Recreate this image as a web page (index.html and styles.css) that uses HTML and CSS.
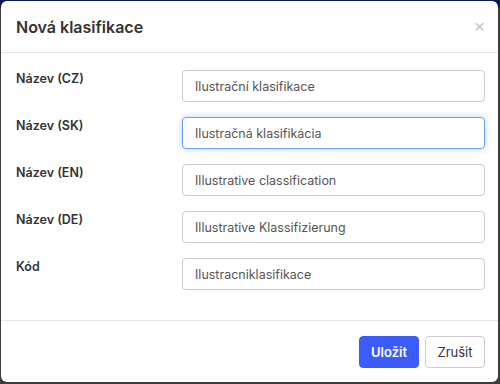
FILE: index.html
```html
<!DOCTYPE html>
<html lang="cs">
<head>
  <meta charset="UTF-8" />
  <meta name="viewport" content="width=device-width, initial-scale=1.0" />
  <title>Nová klasifikace</title>
  <link rel="stylesheet" href="styles.css">
</head>
<body>
  <div class="modal">
    <div class="modal-header">
      <h4>Nová klasifikace</h4>
      <button class="close" type="button">&times;</button>
    </div>

    <form class="modal-body">
      <div class="row">
        <label for="name-cz">Název (CZ)</label>
        <input id="name-cz" type="text" value="Ilustrační klasifikace" />
      </div>
      <div class="row">
        <label for="name-sk">Název (SK)</label>
        <input id="name-sk" class="focused" type="text" value="Ilustračná klasifikácia" />
      </div>
      <div class="row">
        <label for="name-en">Název (EN)</label>
        <input id="name-en" type="text" value="Illustrative classification" />
      </div>
      <div class="row">
        <label for="name-de">Název (DE)</label>
        <input id="name-de" type="text" value="Illustrative Klassifizierung" />
      </div>
      <div class="row">
        <label for="code">Kód</label>
        <input id="code" type="text" value="Ilustracniklasifikace" />
      </div>
    </form>

    <div class="modal-footer">
      <button class="btn btn-primary" type="button">Uložit</button>
      <button class="btn btn-default" type="button">Zrušit</button>
    </div>
  </div>
</body>
</html>
```

FILE: styles.css
```css
html, body {
  height: 100%;
}
body {
  margin: 0;
  padding: 1px 2px 2px 1px;
  box-sizing: border-box;
  font-family: Inter, "Noto Sans", sans-serif;
  color: #333;
  background: linear-gradient(#0d1a4f 0, #0d1a4f 8px, #3d3d3d 8px);
}
.modal {
  background-color: white;
  border-radius: 6px;
  height: 100%;
  display: flex;
  flex-direction: column;
}
.modal-header {
  display: flex;
  align-items: center;
  justify-content: space-between;
  padding: 0 15px;
  height: 51px;
  border-bottom: 1px solid #e5e5e5;
}
.modal-header h4 {
  margin: 0;
  font-size: 16px;
  font-weight: 600;
  color: #333;
}
.close {
  border: none;
  background: none;
  padding: 0;
  margin-right: -2px;
  font-family: "Liberation Sans", sans-serif;
  font-size: 19px;
  line-height: 1;
  color: #c4c4c4;
  cursor: pointer;
}
.modal-body {
  flex: 1;
  padding: 17px 13px 13px 15px;
}
.row {
  display: grid;
  grid-template-columns: 166px 1fr;
  margin-bottom: 15px;
}
.row label {
  font-size: 12.5px;
  font-weight: 600;
  padding-top: 1px;
  color: #333;
}
.row input {
  height: 32px;
  box-sizing: border-box;
  border: 1px solid #ccc;
  border-radius: 4px;
  padding: 0 12px;
  font-family: inherit;
  font-size: 12.5px;
  color: #555;
  outline: none;
}
.row input.focused {
  border-color: #66a3e9;
  box-shadow: 0 0 6px rgba(102, 163, 233, 0.45);
}
.modal-footer {
  display: flex;
  justify-content: flex-end;
  gap: 6px;
  padding: 15px 13px 14px 15px;
  border-top: 1px solid #e5e5e5;
}
.btn {
  height: 32px;
  width: 60px;
  border-radius: 4px;
  font-family: inherit;
  font-size: 13px;
  cursor: pointer;
}
.btn-primary {
  background-color: #3b5cfa;
  border: 1px solid #3b5cfa;
  color: white;
  font-weight: 600;
}
.btn-default {
  background-color: white;
  border: 1px solid #ccc;
  color: #333;
}
```
